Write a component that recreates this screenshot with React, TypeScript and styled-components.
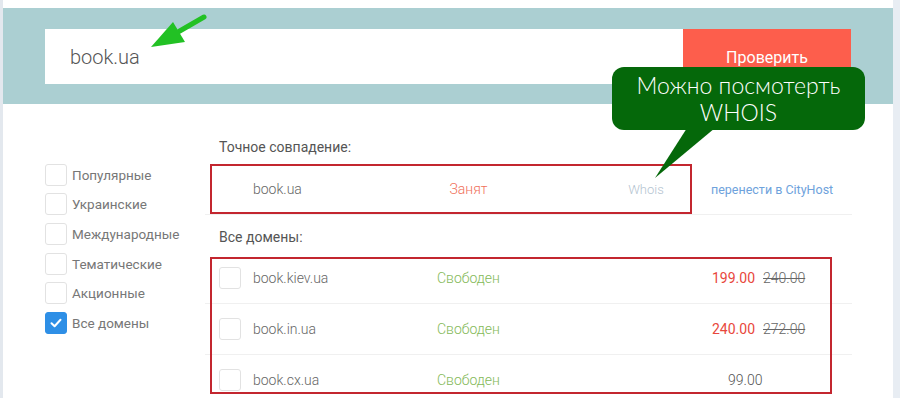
import styled, {createGlobalStyle} from "styled-components";

const GlobalStyle = createGlobalStyle`
  body {
    margin: 0;
    background: #e8edf3;
    font-family: Roboto, "Liberation Sans", sans-serif;
  }
`;

const Page = styled.div`
  width: 900px;
  height: 398px;
  overflow: hidden;
`;

const Panel = styled.div`
  position: relative;
  box-sizing: border-box;
  width: 893px;
  height: 398px;
  padding-top: 8px;
  border-left: 3px solid #e3e8ee;
  background: #fff;
`;

const SearchBand = styled.div`
  display: flex;
  padding: 21px 42px 20px;
  background: #abcfd2;
`;

const SearchInput = styled.input`
  flex: 0 0 638px;
  box-sizing: border-box;
  height: 55px;
  padding: 0 25px;
  border: none;
  outline: none;
  font-family: Roboto, "Liberation Sans", sans-serif;
  font-weight: 300;
  font-size: 20px;
  color: #555;
`;

const CheckButton = styled.button`
  flex: 0 0 168px;
  height: 55px;
  padding-top: 3px;
  border: none;
  background: #fd5e4c;
  color: #fff;
  font-family: Roboto, "Liberation Sans", sans-serif;
  font-size: 16px;
`;

const Body = styled.div`
  display: flex;
  padding-left: 42px;
`;

const Sidebar = styled.div`
  width: 160px;
  padding-top: 56px;
`;

const FilterRow = styled.label`
  display: flex;
  align-items: center;
  gap: 5px;
  height: 29.6px;
  font-size: 13.5px;
  color: #777;
`;

const Box = styled.span<{ $checked?: boolean }>`
  display: inline-flex;
  align-items: center;
  justify-content: center;
  box-sizing: border-box;
  flex: 0 0 22px;
  width: 22px;
  height: 22px;
  border-radius: 3px;
  border: 1px solid ${p => (p.$checked ? "#2e8fe6" : "#e2e2e2")};
  background: ${p => (p.$checked ? "#2e8fe6" : "#fff")};
`;

const Main = styled.div`
  width: 647px;
  padding-top: 33px;
`;

const SectionTitle = styled.div<{ $gap?: number }>`
  height: 20px;
  margin-top: ${p => p.$gap ?? 0}px;
  padding-left: 14px;
  font-size: 14px;
  line-height: 20px;
  color: #555;
`;

const Exact = styled.div`
  position: relative;
  margin-top: 7px;
`;

const List = styled.div`
  position: relative;
  margin-top: 6px;
`;

const Row = styled.div`
  display: grid;
  grid-template-columns: 34px 144px 140px 44px 130px 1fr;
  align-items: center;
  height: 50px;
  padding-left: 14px;
  border-bottom: 1px solid #f0f0f0;
  font-size: 14px;
  font-weight: 300;
`;

const Domain = styled.span`
  color: #666;
`;

const Status = styled.span<{ $busy?: boolean }>`
  padding-left: 3px;
  text-align: center;
  color: ${p => (p.$busy ? "#f0705a" : "#84b957")};
`;

const Whois = styled.span`
  grid-column: 5;
  text-align: center;
  font-size: 13px;
  color: #b3c3d0;
`;

const Transfer = styled.a`
  font-size: 12.5px;
  font-weight: 400;
  color: #6ea2dc;
`;

const Price = styled.span<{ $discount?: boolean }>`
  grid-column: 5 / 7;
  display: flex;
  gap: 8px;
  padding-left: ${p => (p.$discount ? "131px" : "147px")};
  color: #555;
`;

const NewPrice = styled.span`
  color: #e8473c;
  font-weight: 400;
`;

const OldPrice = styled.span`
  color: #666;
  text-decoration: line-through;
`;

const Highlight = styled.div<{ $top: number; $width: number; $height: number }>`
  position: absolute;
  left: 5px;
  top: ${p => p.$top}px;
  width: ${p => p.$width}px;
  height: ${p => p.$height}px;
  box-sizing: border-box;
  border: 2px solid #c3262f;
  pointer-events: none;
`;

const Arrow = styled.svg`
  position: absolute;
  left: 137px;
  top: 10px;
`;

const Bubble = styled.div`
  position: absolute;
  left: 609px;
  top: 67px;
  box-sizing: border-box;
  width: 253px;
  height: 63px;
  padding-top: 5px;
  border-radius: 12px;
  background: #05680a;
  color: #fff;
  text-align: center;
  font-family: Lato, "DejaVu Sans", sans-serif;
  font-weight: 300;
  font-size: 23px;
  line-height: 27px;
`;

const BubbleTail = styled.svg`
  position: absolute;
  left: 646px;
  top: 128px;
`;

const filters = [
    {name: "Популярные"},
    {name: "Украинские"},
    {name: "Международные"},
    {name: "Тематические"},
    {name: "Акционные"},
    {name: "Все домены", checked: true},
];

const domains = [
    {name: "book.kiev.ua", price: "199.00", old: "240.00"},
    {name: "book.in.ua", price: "240.00", old: "272.00"},
    {name: "book.cx.ua", price: "99.00"},
];

const Check = () => (
    <svg width="12" height="10" viewBox="0 0 12 10">
        <path d="M1.5 5.2 L4.6 8.2 L10.5 1.8" fill="none" stroke="#fff" strokeWidth="2" strokeLinecap="round"
              strokeLinejoin="round"/>
    </svg>
);

const App = () => {
    return (
        <Page>
            <GlobalStyle/>
            <Panel>
                <SearchBand>
                    <SearchInput defaultValue="book.ua" readOnly/>
                    <CheckButton>Проверить</CheckButton>
                </SearchBand>
                <Body>
                    <Sidebar>
                        {filters.map(({name, checked}) => (
                            <FilterRow key={name}>
                                <Box $checked={checked}>{checked && <Check/>}</Box>
                                {name}
                            </FilterRow>
                        ))}
                    </Sidebar>
                    <Main>
                        <SectionTitle>Точное совпадение:</SectionTitle>
                        <Exact>
                            <Row>
                                <span/>
                                <Domain>book.ua</Domain>
                                <Status $busy>Занят</Status>
                                <Whois>Whois</Whois>
                                <Transfer>перенести в CityHost</Transfer>
                            </Row>
                            <Highlight $top={0} $width={482} $height={50}/>
                        </Exact>
                        <SectionTitle $gap={12}>Все домены:</SectionTitle>
                        <List>
                            {domains.map(({name, price, old}) => (
                                <Row key={name}>
                                    <Box/>
                                    <Domain>{name}</Domain>
                                    <Status>Свободен</Status>
                                    <Price $discount={!!old}>
                                        {old ? <NewPrice>{price}</NewPrice> : price}
                                        {old && <OldPrice>{old}</OldPrice>}
                                    </Price>
                                </Row>
                            ))}
                            <Highlight $top={4} $width={622} $height={137}/>
                        </List>
                    </Main>
                </Body>
                <Arrow width="70" height="45" viewBox="0 0 70 45">
                    <line x1="64" y1="7" x2="38" y2="22" stroke="#22c124" strokeWidth="5" strokeLinecap="round"/>
                    <polygon points="11,37 33,12 45,32" fill="#22c124"/>
                </Arrow>
                <BubbleTail width="70" height="52" viewBox="0 0 70 52">
                    <polygon points="38,0 66,0 6,50" fill="#05680a"/>
                </BubbleTail>
                <Bubble>
                    Можно посмотерть<br/>WHOIS
                </Bubble>
            </Panel>
        </Page>
    );
};

export default App;
